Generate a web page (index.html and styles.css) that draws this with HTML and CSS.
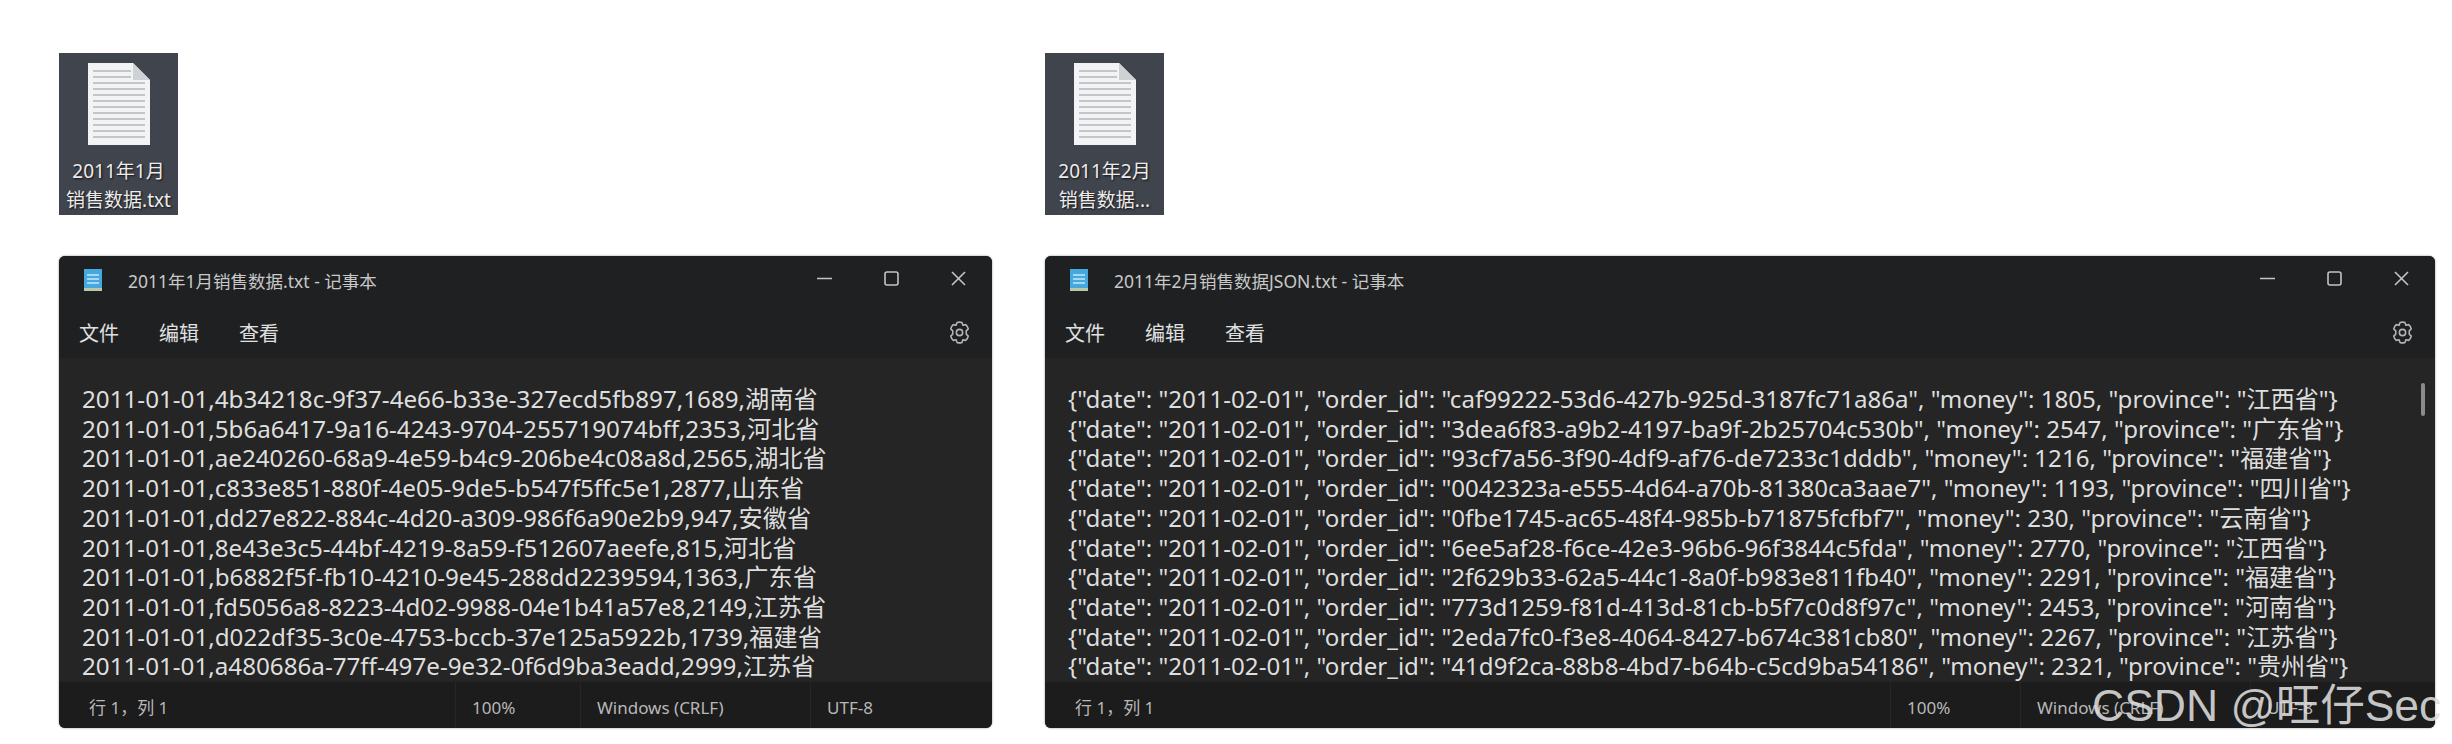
FILE: index.html
```html
<!DOCTYPE html>
<html lang="zh-CN">
<head>
    <meta charset="UTF-8">
    <title>销售数据</title>
    <link rel="stylesheet" href="styles.css">
</head>
<body>
    <div class="page">
        <div class="column column-left">
            <div class="file-icon">
                <svg class="doc" width="64" height="84" viewBox="0 0 64 84">
                    <path d="M1 1H46L63 18V83H1Z" fill="#f1f3f4"/>
                    <path d="M46 1L63 18H46Z" fill="#cfd2d5"/>
                    <path d="M6 9H44M6 15H44M6 21H58M6 27H58M6 33H58M6 39H58M6 45H58M6 51H58M6 57H58M6 63H58M6 69H58M6 75H58" stroke="#b4b7b9" stroke-width="1.5"/>
                </svg>
                <div class="file-name">2011年1月<br>销售数据.txt</div>
            </div>
            <div class="window">
                <div class="titlebar">
                    <svg class="app-icon" width="18" height="22" viewBox="0 0 18 22">
                        <rect width="18" height="22" fill="#45a8de"/>
                        <rect y="19" width="18" height="3" fill="#b9c9a8"/>
                        <path d="M3 6H15M3 10H15M3 14H15" stroke="#c6e8f8" stroke-width="1.5"/>
                    </svg>
                    <span class="title">2011年1月销售数据.txt - 记事本</span>
                    <div class="controls">
                        <svg width="15" height="15" viewBox="0 0 15 15"><path d="M0 7.500H15" stroke="#c4c4c4" stroke-width="1.6"/></svg>
                        <svg width="15" height="15" viewBox="0 0 15 15"><rect x="1" y="1" width="13" height="13" rx="2" fill="none" stroke="#c4c4c4" stroke-width="1.6"/></svg>
                        <svg width="15" height="15" viewBox="0 0 15 15"><path d="M1 1L14 14M14 1L1 14" stroke="#c4c4c4" stroke-width="1.6"/></svg>
                    </div>
                </div>
                <div class="menubar">
                    <span>文件</span>
                    <span>编辑</span>
                    <span>查看</span>
                    <svg class="gear" width="27" height="27" viewBox="0 0 24 24" fill="none" stroke="#b4b4b4" stroke-width="1.400" stroke-linejoin="round">
                        <path d="M9.800 3.200Q12 2.400 14.200 3.200L15 5.600L17.500 5Q19.300 6.500 19.800 8.800L18 10.600V13.400L19.800 15.200Q19.300 17.500 17.500 19L15 18.400L14.200 20.800Q12 21.600 9.800 20.800L9 18.400L6.500 19Q4.700 17.500 4.200 15.200L6 13.400V10.600L4.200 8.800Q4.700 6.500 6.500 5L9 5.600Z"/>
                        <circle cx="12" cy="12" r="2.800"/>
                    </svg>
                </div>
                <div class="content">
                    <div>2011-01-01,4b34218c-9f37-4e66-b33e-327ecd5fb897,1689,湖南省</div>
                    <div>2011-01-01,5b6a6417-9a16-4243-9704-255719074bff,2353,河北省</div>
                    <div>2011-01-01,ae240260-68a9-4e59-b4c9-206be4c08a8d,2565,湖北省</div>
                    <div>2011-01-01,c833e851-880f-4e05-9de5-b547f5ffc5e1,2877,山东省</div>
                    <div>2011-01-01,dd27e822-884c-4d20-a309-986f6a90e2b9,947,安徽省</div>
                    <div>2011-01-01,8e43e3c5-44bf-4219-8a59-f512607aeefe,815,河北省</div>
                    <div>2011-01-01,b6882f5f-fb10-4210-9e45-288dd2239594,1363,广东省</div>
                    <div>2011-01-01,fd5056a8-8223-4d02-9988-04e1b41a57e8,2149,江苏省</div>
                    <div>2011-01-01,d022df35-3c0e-4753-bccb-37e125a5922b,1739,福建省</div>
                    <div>2011-01-01,a480686a-77ff-497e-9e32-0f6d9ba3eadd,2999,江苏省</div>
                </div>
                <div class="statusbar">
                    <span class="status-pos">行 1，列 1</span>
                    <span class="status-zoom">100%</span>
                    <span class="status-eol">Windows (CRLF)</span>
                    <span class="status-enc">UTF-8</span>
                </div>
            </div>
        </div>
        <div class="column column-right">
            <div class="file-icon">
                <svg class="doc" width="64" height="84" viewBox="0 0 64 84">
                    <path d="M1 1H46L63 18V83H1Z" fill="#f1f3f4"/>
                    <path d="M46 1L63 18H46Z" fill="#cfd2d5"/>
                    <path d="M6 9H44M6 15H44M6 21H58M6 27H58M6 33H58M6 39H58M6 45H58M6 51H58M6 57H58M6 63H58M6 69H58M6 75H58" stroke="#b4b7b9" stroke-width="1.5"/>
                </svg>
                <div class="file-name">2011年2月<br>销售数据...</div>
            </div>
            <div class="window">
                <div class="titlebar">
                    <svg class="app-icon" width="18" height="22" viewBox="0 0 18 22">
                        <rect width="18" height="22" fill="#45a8de"/>
                        <rect y="19" width="18" height="3" fill="#b9c9a8"/>
                        <path d="M3 6H15M3 10H15M3 14H15" stroke="#c6e8f8" stroke-width="1.5"/>
                    </svg>
                    <span class="title">2011年2月销售数据JSON.txt - 记事本</span>
                    <div class="controls">
                        <svg width="15" height="15" viewBox="0 0 15 15"><path d="M0 7.500H15" stroke="#c4c4c4" stroke-width="1.6"/></svg>
                        <svg width="15" height="15" viewBox="0 0 15 15"><rect x="1" y="1" width="13" height="13" rx="2" fill="none" stroke="#c4c4c4" stroke-width="1.6"/></svg>
                        <svg width="15" height="15" viewBox="0 0 15 15"><path d="M1 1L14 14M14 1L1 14" stroke="#c4c4c4" stroke-width="1.6"/></svg>
                    </div>
                </div>
                <div class="menubar">
                    <span>文件</span>
                    <span>编辑</span>
                    <span>查看</span>
                    <svg class="gear" width="27" height="27" viewBox="0 0 24 24" fill="none" stroke="#b4b4b4" stroke-width="1.400" stroke-linejoin="round">
                        <path d="M9.800 3.200Q12 2.400 14.200 3.200L15 5.600L17.500 5Q19.300 6.500 19.800 8.800L18 10.600V13.400L19.800 15.200Q19.300 17.500 17.500 19L15 18.400L14.200 20.800Q12 21.600 9.800 20.800L9 18.400L6.500 19Q4.700 17.500 4.200 15.200L6 13.400V10.600L4.200 8.800Q4.700 6.500 6.500 5L9 5.600Z"/>
                        <circle cx="12" cy="12" r="2.800"/>
                    </svg>
                </div>
                <div class="content">
                    <div>{"date": "2011-02-01", "order_id": "caf99222-53d6-427b-925d-3187fc71a86a", "money": 1805, "province": "江西省"}</div>
                    <div>{"date": "2011-02-01", "order_id": "3dea6f83-a9b2-4197-ba9f-2b25704c530b", "money": 2547, "province": "广东省"}</div>
                    <div>{"date": "2011-02-01", "order_id": "93cf7a56-3f90-4df9-af76-de7233c1dddb", "money": 1216, "province": "福建省"}</div>
                    <div>{"date": "2011-02-01", "order_id": "0042323a-e555-4d64-a70b-81380ca3aae7", "money": 1193, "province": "四川省"}</div>
                    <div>{"date": "2011-02-01", "order_id": "0fbe1745-ac65-48f4-985b-b71875fcfbf7", "money": 230, "province": "云南省"}</div>
                    <div>{"date": "2011-02-01", "order_id": "6ee5af28-f6ce-42e3-96b6-96f3844c5fda", "money": 2770, "province": "江西省"}</div>
                    <div>{"date": "2011-02-01", "order_id": "2f629b33-62a5-44c1-8a0f-b983e811fb40", "money": 2291, "province": "福建省"}</div>
                    <div>{"date": "2011-02-01", "order_id": "773d1259-f81d-413d-81cb-b5f7c0d8f97c", "money": 2453, "province": "河南省"}</div>
                    <div>{"date": "2011-02-01", "order_id": "2eda7fc0-f3e8-4064-8427-b674c381cb80", "money": 2267, "province": "江苏省"}</div>
                    <div>{"date": "2011-02-01", "order_id": "41d9f2ca-88b8-4bd7-b64b-c5cd9ba54186", "money": 2321, "province": "贵州省"}</div>
                    <div class="scrollbar"></div>
                </div>
                <div class="statusbar">
                    <span class="status-pos">行 1，列 1</span>
                    <span class="status-zoom">100%</span>
                    <span class="status-eol">Windows (CRLF)</span>
                    <span class="status-enc">UTF-8</span>
                </div>
            </div>
            <div class="watermark">CSDN @旺仔Sec</div>
        </div>
    </div>
</body>
</html>
```

FILE: styles.css
```css
html, body {
    margin: 0;
    height: 744px;
    overflow: hidden;
    background-color: #fff;
}
body {
    font-family: 'Noto Sans', 'Noto Sans CJK SC', sans-serif;
    color: #dedede;
}
.page {
    display: flex;
    padding: 53px 0 0 59px;
}
.column {
    position: relative;
    display: flex;
    flex-direction: column;
    align-items: flex-start;
}
.column-left {
    width: 986px;
}
.column-right {
    width: 1390px;
}
.file-icon {
    width: 119px;
    height: 162px;
    background-color: #40444d;
    display: flex;
    flex-direction: column;
    align-items: center;
    padding-top: 9px;
    box-sizing: border-box;
}
.doc {
    display: block;
}
.file-name {
    margin-top: 11px;
    font-size: 19px;
    line-height: 29px;
    text-align: center;
    white-space: nowrap;
    color: #ececec;
    text-shadow: 1px 1px 2px #111;
}
.window {
    margin-top: 41px;
    width: 100%;
    height: 472px;
    display: flex;
    flex-direction: column;
    background-color: #252525;
    border-radius: 6px;
    box-shadow: 0 0 2px rgba(0, 0, 0, 0.5);
    overflow: hidden;
}
.column-left .window {
    width: 933px;
}
.titlebar {
    height: 50px;
    flex-shrink: 0;
    display: flex;
    align-items: center;
    background-color: #1f2022;
    padding: 0 26px 0 25px;
}
.app-icon {
    flex-shrink: 0;
    margin-bottom: 2px;
}
.title {
    margin-left: 26px;
    margin-bottom: 2px;
    font-size: 17.500px;
    color: #c8c8c8;
}
.controls {
    margin-left: auto;
    margin-bottom: 5px;
    display: flex;
    gap: 52px;
}
.controls svg {
    display: block;
}
.menubar {
    height: 52px;
    flex-shrink: 0;
    display: flex;
    align-items: center;
    gap: 40px;
    background-color: #1f2022;
    padding: 0 19px 0 20px;
    font-size: 20px;
    color: #e0e0e0;
}
.gear {
    margin-left: auto;
}
.content {
    position: relative;
    flex: 1;
    padding: 26px 0 0 23px;
    font-size: 24.200px;
    line-height: 29.700px;
    white-space: nowrap;
}
.column-right .content {
    font-size: 24.080px;
}
.scrollbar {
    position: absolute;
    top: 25px;
    right: 10px;
    width: 4px;
    height: 33px;
    border-radius: 2px;
    background-color: #8b8b8b;
}
.statusbar {
    height: 46px;
    flex-shrink: 0;
    display: flex;
    align-items: stretch;
    background-color: #1c1c1c;
    font-size: 17px;
    line-height: 46px;
    color: #b8b8b8;
}
.statusbar span {
    padding-top: 3px;
    padding-left: 16px;
    box-sizing: border-box;
    border-left: 1px solid #262626;
}
.statusbar .status-pos {
    flex: 1;
    padding-left: 30px;
    border-left: none;
}
.status-zoom {
    width: 125px;
}
.status-eol {
    width: 230px;
}
.status-enc {
    width: 182px;
}
.column-right .status-zoom {
    width: 130px;
}
.column-right .status-enc {
    width: 185px;
}
.watermark {
    position: absolute;
    left: 1047px;
    top: 628px;
    font-family: 'Liberation Sans', 'Noto Sans CJK SC', sans-serif;
    font-size: 44.500px;
    line-height: 50px;
    white-space: nowrap;
    color: rgba(222, 222, 222, 0.88);
}
```
